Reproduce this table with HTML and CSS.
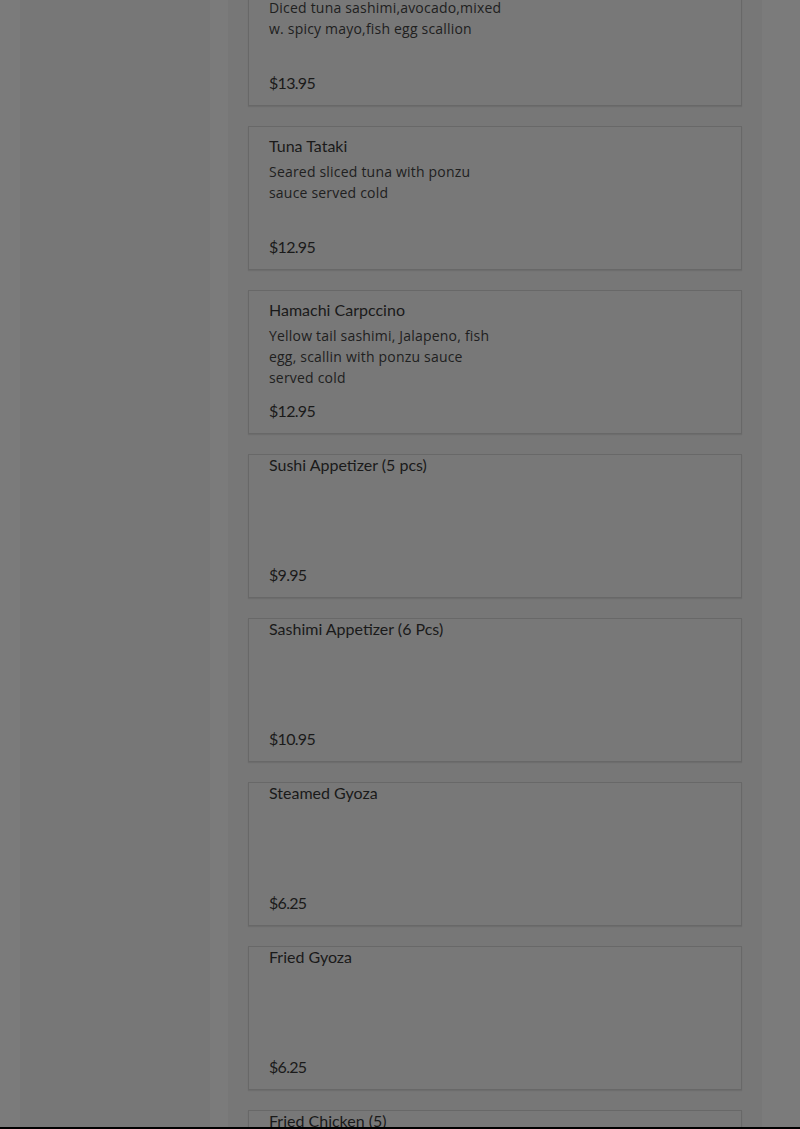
FILE: index.html
```html
<!DOCTYPE html>
<html>
<head>
<meta charset="utf-8">
<link rel="stylesheet" href="styles.css">
</head>
<body>
<div class="page">
  <aside class="sidebar"></aside>
  <main class="menu">
    <div class="list">
      <div class="card has-desc">
        <div class="name">Tuna Salad</div>
        <div class="desc">Diced tuna sashimi,avocado,mixed w. spicy mayo,fish egg scallion</div>
        <div class="price">$13.95</div>
      </div>
      <div class="card has-desc">
        <div class="name">Tuna Tataki</div>
        <div class="desc">Seared sliced tuna with ponzu sauce served cold</div>
        <div class="price">$12.95</div>
      </div>
      <div class="card has-desc">
        <div class="name">Hamachi Carpccino</div>
        <div class="desc">Yellow tail sashimi, Jalapeno, fish egg, scallin with ponzu sauce served cold</div>
        <div class="price">$12.95</div>
      </div>
      <div class="card">
        <div class="name">Sushi Appetizer (5 pcs)</div>
        <div class="price">$9.95</div>
      </div>
      <div class="card">
        <div class="name">Sashimi Appetizer (6 Pcs)</div>
        <div class="price">$10.95</div>
      </div>
      <div class="card">
        <div class="name">Steamed Gyoza</div>
        <div class="price">$6.25</div>
      </div>
      <div class="card">
        <div class="name">Fried Gyoza</div>
        <div class="price">$6.25</div>
      </div>
      <div class="card">
        <div class="name">Fried Chicken (5)</div>
        <div class="price">$6.25</div>
      </div>
    </div>
  </main>
</div>
<div class="bottom-bar"></div>
</body>
</html>
```
FILE: styles.css
```css
html, body {
  margin: 0;
  padding: 0;
  background: #7b7b7b;
  overflow: hidden;
  height: 1129px;
}
.page {
  display: flex;
  gap: 18px;
  padding-left: 20px;
  margin-top: -58px;
}
.sidebar {
  width: 190px;
  flex: none;
  background: #777777;
  min-height: 1300px;
}
.menu {
  width: 534px;
  flex: none;
  background: #777777;
  padding: 0 20px;
  box-sizing: border-box;
}
.list {
  display: flex;
  flex-direction: column;
  gap: 20px;
  padding-top: 20px;
}
.card {
  height: 144px;
  box-sizing: border-box;
  border: 1px solid #686868;
  box-shadow: 0 1px 1px rgba(0,0,0,0.08);
  background: #787878;
  padding: 0 20px 12px;
  display: flex;
  flex-direction: column;
  color: #1a1a1a;
}
.name {
  font-family: Lato, "Liberation Sans", sans-serif;
  font-size: 16px;
  line-height: 20px;
}
.has-desc .name {
  margin-top: 9px;
}
.desc {
  font-family: "Open Sans", "Liberation Sans", sans-serif;
  font-size: 14px;
  letter-spacing: 0.2px;
  line-height: 21px;
  max-width: 237px;
  margin-top: 5px;
  color: #202020;
}
.price {
  margin-top: auto;
  font-family: Lato, "Liberation Sans", sans-serif;
  font-size: 16px;
  line-height: 20px;
  letter-spacing: -0.7px;
}
.bottom-bar {
  position: fixed;
  left: 0;
  right: 0;
  bottom: 0;
  height: 2px;
  background: #000;
}
```
